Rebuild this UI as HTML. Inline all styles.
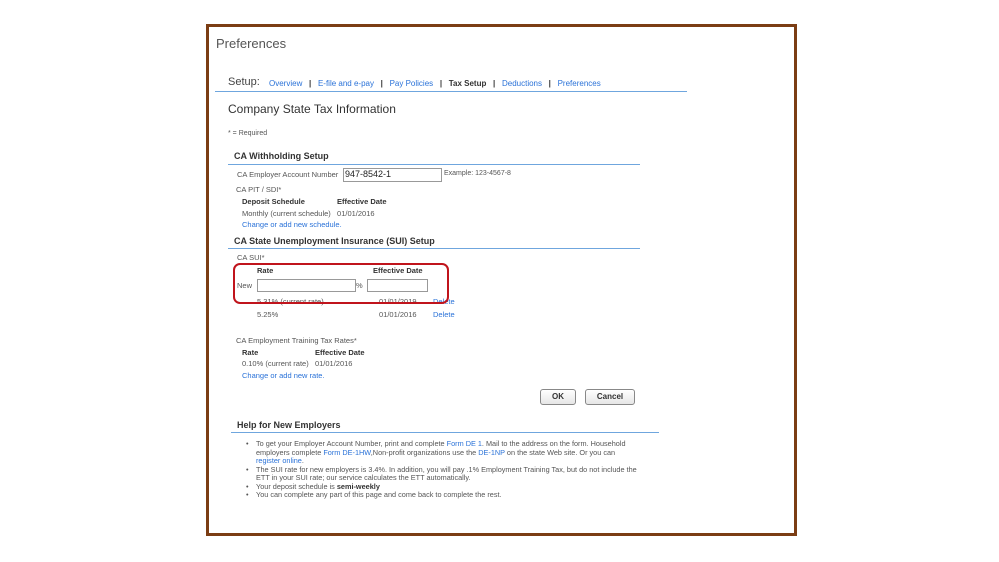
<!DOCTYPE html>
<html><head><style>
body{margin:0;width:999px;height:562px;background:#fff;position:relative;font-family:"Liberation Sans",Arial,sans-serif;overflow:hidden}
.a{position:absolute;white-space:nowrap}
.frame{position:absolute;left:206px;top:24px;width:585px;height:506px;border:3px solid #7b3d14}
.s{font-size:7.5px;color:#555}
.b{font-size:7.5px;color:#333;font-weight:bold}
.l{color:#2a72d8}
.h{font-size:9px;color:#333;font-weight:bold}
.sh{font-size:9px;color:#333;font-weight:bold}
.line{position:absolute;height:1px;background:#6fa6de}
.inp{position:absolute;border:1px solid #999;background:#fff}
.btn{position:absolute;border:1px solid #888;border-radius:3px;background:linear-gradient(#fff,#e6e6e6);font-size:8px;font-weight:bold;color:#333;text-align:center;line-height:14px}
</style></head><body>
<div class="frame"></div>
<div class="a" style="left:216px;top:36px;font-size:13px;color:#555">Preferences</div>
<div class="a" style="left:228px;top:76px;font-size:11px;color:#444">Setup:</div>
<div class="a" style="left:269px;top:79px;font-size:8px;color:#555"><span class="l">Overview</span> &nbsp;&nbsp;<b style="color:#333">|</b>&nbsp;&nbsp; <span class="l">E-file and e-pay</span> &nbsp;&nbsp;<b style="color:#333">|</b>&nbsp;&nbsp; <span class="l">Pay Policies</span> &nbsp;&nbsp;<b style="color:#333">|</b>&nbsp;&nbsp; <b style="color:#333">Tax Setup</b> &nbsp;&nbsp;<b style="color:#333">|</b>&nbsp;&nbsp; <span class="l">Deductions</span> &nbsp;&nbsp;<b style="color:#333">|</b>&nbsp;&nbsp; <span class="l">Preferences</span></div>
<div class="line" style="left:215px;top:91px;width:472px"></div>
<div class="a" style="left:228px;top:102px;font-size:12px;color:#333">Company State Tax Information</div>
<div class="a s" style="left:228px;top:130px;font-size:7px">* = Required</div>
<div class="a sh" style="left:234px;top:151px">CA Withholding Setup</div>
<div class="line" style="left:228px;top:164px;width:412px"></div>
<div class="a s" style="left:237px;top:170px">CA Employer Account Number</div>
<div class="inp" style="left:343px;top:168px;width:97px;height:12px"></div>
<div class="a" style="left:345px;top:169px;font-size:9px;color:#222">947-8542-1</div>
<div class="a s" style="left:444px;top:170px;font-size:7px">Example: 123-4567-8</div>
<div class="a s" style="left:236px;top:185px">CA PIT / SDI*</div>
<div class="a b" style="left:242px;top:197px">Deposit Schedule</div>
<div class="a b" style="left:337px;top:197px">Effective Date</div>
<div class="a s" style="left:242px;top:209px">Monthly (current schedule) &nbsp;&nbsp;01/01/2016</div>
<div class="a s l" style="left:242px;top:220px">Change or add new schedule.</div>
<div class="a sh" style="left:234px;top:236px">CA State Unemployment Insurance (SUI) Setup</div>
<div class="line" style="left:228px;top:248px;width:412px"></div>
<div class="a s" style="left:237px;top:253px">CA SUI*</div>
<div class="a b" style="left:257px;top:266px">Rate</div>
<div class="a b" style="left:373px;top:266px">Effective Date</div>
<div class="a s" style="left:237px;top:281px">New</div>
<div class="inp" style="left:257px;top:279px;width:97px;height:11px"></div>
<div class="a s" style="left:356px;top:281px">%</div>
<div class="inp" style="left:367px;top:279px;width:59px;height:11px"></div>
<div class="a s" style="left:257px;top:297px">5.31% (current rate)</div>
<div class="a s" style="left:379px;top:297px">01/01/2019</div>
<div class="a s l" style="left:433px;top:297px">Delete</div>
<div style="position:absolute;left:233px;top:263px;width:212px;height:37px;border:2.5px solid #c0141c;border-radius:7px"></div>
<div class="a s" style="left:257px;top:310px">5.25%</div>
<div class="a s" style="left:379px;top:310px">01/01/2016</div>
<div class="a s l" style="left:433px;top:310px">Delete</div>
<div class="a s" style="left:236px;top:336px">CA Employment Training Tax Rates*</div>
<div class="a b" style="left:242px;top:348px">Rate</div>
<div class="a b" style="left:315px;top:348px">Effective Date</div>
<div class="a s" style="left:242px;top:359px">0.10% (current rate) &nbsp;&nbsp;01/01/2016</div>
<div class="a s l" style="left:242px;top:371px">Change or add new rate.</div>
<div class="btn" style="left:540px;top:389px;width:34px">OK</div>
<div class="btn" style="left:585px;top:389px;width:48px">Cancel</div>
<div class="a h" style="left:237px;top:420px">Help for New Employers</div>
<div class="line" style="left:231px;top:432px;width:428px"></div>
<div class="a s" style="left:246px;top:440px;line-height:8.5px;font-size:7.3px;white-space:normal;width:396px">
<div style="position:relative;padding-left:10px"><span style="position:absolute;left:0">•</span>To get your Employer Account Number, print and complete <span class="l">Form DE 1</span>. Mail to the address on the form. Household employers complete <span class="l">Form DE-1HW</span>,Non-profit organizations use the <span class="l">DE-1NP</span> on the state Web site. Or you can<br><span class="l">register online</span>.</div>
<div style="position:relative;padding-left:10px"><span style="position:absolute;left:0">•</span>The SUI rate for new employers is 3.4%. In addition, you will pay .1% Employment Training Tax, but do not include the ETT in your SUI rate; our service calculates the ETT automatically.</div>
<div style="position:relative;padding-left:10px"><span style="position:absolute;left:0">•</span>Your deposit schedule is <b style="color:#333">semi-weekly</b></div>
<div style="position:relative;padding-left:10px"><span style="position:absolute;left:0">•</span>You can complete any part of this page and come back to complete the rest.</div>
</div>
</body></html>
